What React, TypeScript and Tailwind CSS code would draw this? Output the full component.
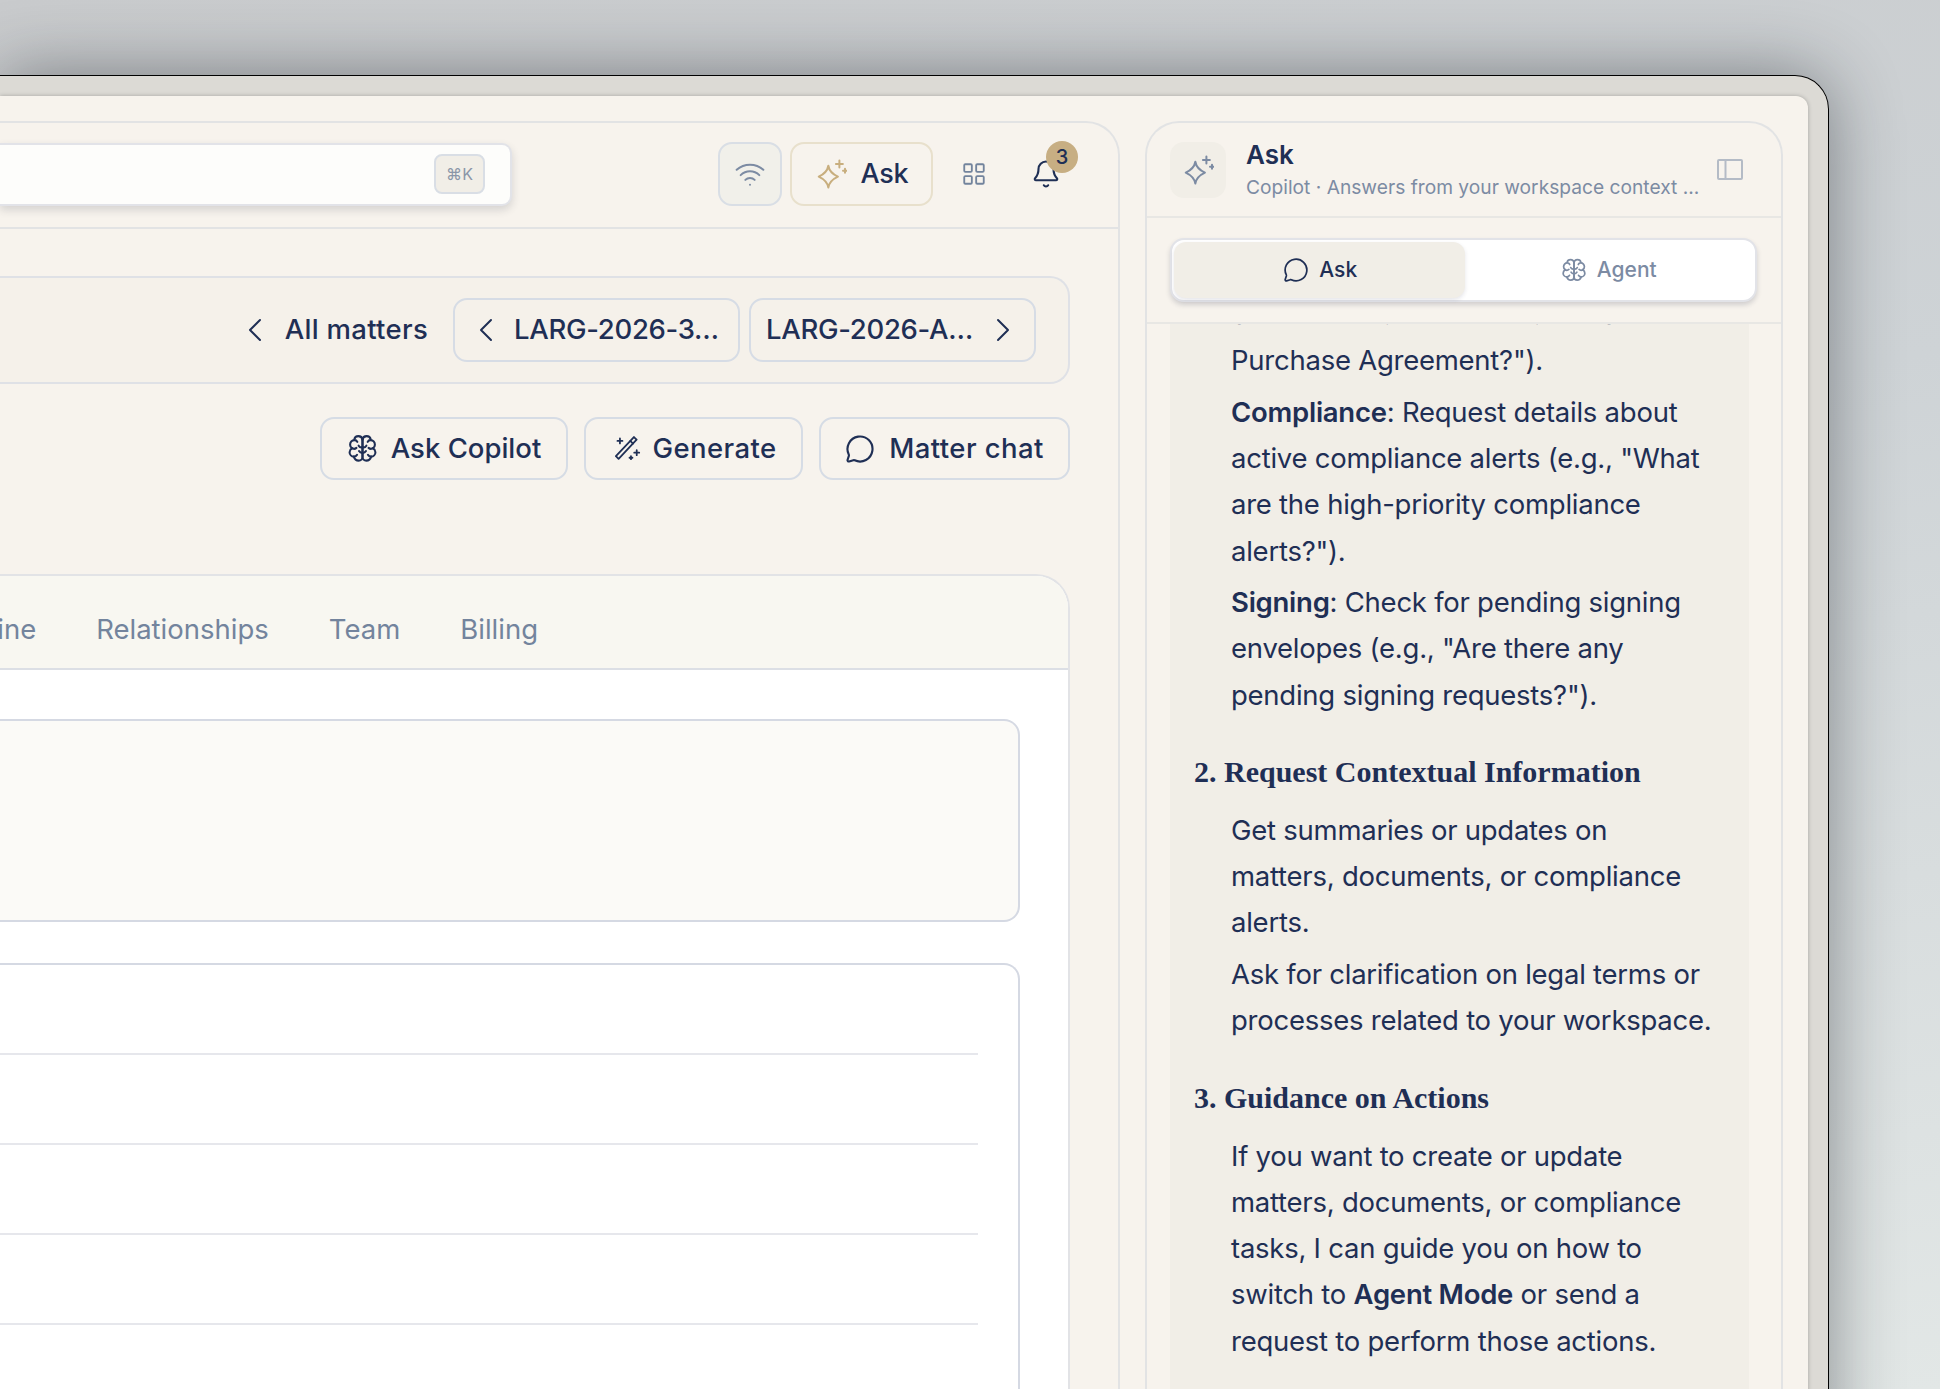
import { Bell, ChevronLeft, ChevronRight, LayoutGrid, MessageCircle, Wifi } from "lucide-react";
import type { ReactNode } from "react";

const sans = "font-['Inter','Liberation_Sans',sans-serif]";
const serif = "font-['Liberation_Serif',serif]";

function StarIcon({ className }: { className: string }) {
  return (
    <svg viewBox="0 0 24 24" fill="none" stroke="currentColor" strokeWidth="1.5" strokeLinecap="round" strokeLinejoin="round" className={className}>
      <path d="M10 5.800C10.600 9.500 12.500 11.800 17.200 14C12.500 16.200 10.600 18.500 10 22.200C9.400 18.500 7.500 16.200 2.800 14C7.500 11.800 9.400 9.500 10 5.800Z" />
      <path d="M18.300 1.900v5.200M15.700 4.500h5.200" />
      <path d="M22.500 8v3M21 9.500h3" />
    </svg>
  );
}

function BrainIcon({ className, strokeWidth = 1.6 }: { className: string; strokeWidth?: number }) {
  const half = (
    <>
      <path d="M12 5C11.700 3.400 10.300 2.400 8.800 2.400C7.300 2.400 6 3.300 5.700 4.800" />
      <path d="M8 6.900C7.600 6 6.500 5.500 5.700 5.500C3.800 5.500 2.400 7 2.400 9C2.400 10.200 3 11.200 3.900 11.800" />
      <path d="M3.900 11.800C2.700 12.500 2 13.600 2 14.900C2 16.800 3.500 18.300 5.300 18.300C5.800 20 7.300 21.400 9 21.400C10.800 21.400 12 20 12 18.500V5" />
      <path d="M3.900 11.800C5 12.500 6.400 12.300 7.300 11.500" />
      <path d="M5.300 18.300C6.300 18.300 7.300 17.800 7.800 16.900" />
      <path d="M12 11C10.800 11.300 9.600 10.800 9 9.800" />
      <path d="M12 15.500C10.800 15.500 9.800 14.900 9.300 14" />
    </>
  );
  return (
    <svg viewBox="0 0 24 24" fill="none" stroke="currentColor" strokeWidth={strokeWidth} strokeLinecap="round" strokeLinejoin="round" className={className}>
      {half}
      <g transform="matrix(-1 0 0 1 24 0)">{half}</g>
    </svg>
  );
}

function WandIcon({ className }: { className: string }) {
  return (
    <svg viewBox="0 0 24 24" fill="none" stroke="currentColor" strokeWidth="1.6" strokeLinecap="round" strokeLinejoin="round" className={className}>
      <path d="M.8 18.800 16.800 1.800 19.200 4.200 3.200 21.200Z" />
      <path d="M13.600 5.200 16 7.600" />
      <path d="M4.400 3.100v4.400M2.200 5.300h4.400" />
      <path d="M19.300 13.500v4.400M17.100 15.700h4.400" />
      <path d="M14.200 18.900v2.600M12.900 20.200h2.600" />
    </svg>
  );
}

function PanelIcon() {
  return (
    <svg viewBox="0 0 26 21" fill="none" stroke="#b4bbc6" strokeWidth="2" className="ml-[10px] h-[21px] w-[26px] shrink-0">
      <rect x="1" y="1" width="24" height="19" rx="1" />
      <path d="M8.500 1v19" />
    </svg>
  );
}

function ActionButton({ icon, label, className }: { icon: ReactNode; label: string; className: string }) {
  return (
    <button className={`flex h-[63px] items-center justify-center gap-[14px] rounded-[14px] border-2 border-[#d6dce5] text-[27.500px] font-medium text-[#1f2f55] ${className}`}>
      {icon}
      {label}
    </button>
  );
}

function Para({ children }: { children: ReactNode }) {
  return <p className="mb-[5.500px] pr-[35px] pl-[61px] last:mb-0">{children}</p>;
}

export default function App() {
  return (
    <div className={`h-[1389px] w-[1940px] overflow-hidden bg-[linear-gradient(170deg,#c9cbcd_0%,#ced3d6_40%,#e2e7e6_100%)] pt-[75px] pr-[111px] ${sans}`}>
      <div className="h-[1400px] rounded-tr-[34px] border-t border-r border-black bg-[#dcdad5] pt-[20px] pr-[20px] shadow-[0_0_70px_rgba(20,25,30,0.45)]">
        <div className="flex h-full rounded-tr-[12px] bg-[#f7f3ed] pt-[25px] pr-[25px] shadow-[0_0_4px_rgba(0,0,0,0.25)]">
          {/* main column */}
          <div className="h-full w-[1120px] shrink-0 rounded-tr-[34px] border-t-2 border-r-2 border-[#e2e3e4]">
            <header className="flex h-[106px] items-center border-b-2 border-[#e2e3e4] pb-[2px]">
              <div className="flex h-[63px] w-[512px] items-center justify-end rounded-r-[10px] border-2 border-l-0 border-[#e2e3e8] bg-[#fdfdfb] pr-[25px] shadow-[0_4px_8px_rgba(40,45,60,0.16)]">
                <kbd className={`flex h-[40px] w-[51px] items-center justify-center rounded-[8px] border-2 border-[#d9dee5] bg-[#f1eee7] text-[16px] text-[#8a96a8] ${sans}`}>⌘K</kbd>
              </div>
              <button className="ml-[206px] flex size-[64px] items-center justify-center rounded-[14px] border-2 border-[#d9dee5] bg-[#f1f0ea]">
                <Wifi className="size-[32px] text-[#7c8ba3]" strokeWidth={1.5} />
              </button>
              <button className="ml-[8px] flex h-[64px] w-[143px] items-center justify-center gap-[14px] rounded-[14px] border-2 border-[#e8e0cc] text-[27px] font-medium tracking-[-0.3px] text-[#1f2f55]">
                <StarIcon className="size-[32px] text-[#c8ae7e]" />
                Ask
              </button>
              <LayoutGrid className="ml-[28px] size-[26px] text-[#73849d]" strokeWidth={1.7} />
              <div className="relative ml-[44px] size-[30px]">
                <Bell className="size-[30px] text-[#1f2f55]" strokeWidth={1.7} />
                <span className="absolute top-[-18px] left-[15px] flex size-[32px] items-center justify-center rounded-full bg-[#c7ae83] text-[20px] font-medium text-[#1f2f55]">3</span>
              </div>
            </header>

            <div className="pr-[48px]">
              <div className="mt-[47px] flex h-[108px] items-center justify-end rounded-r-[20px] border-2 border-l-0 border-[#dfe1e6] bg-[#f5f1ea] pr-[32px] text-[27.500px] font-medium text-[#1f2f55]">
                <ChevronLeft className="size-[40px]" strokeWidth={1.2} />
                <span className="mr-[25px] ml-[10px] tracking-[0.3px]">All matters</span>
                <button className="flex h-[64px] w-[287px] items-center gap-[8px] rounded-[14px] border-2 border-[#d6dce5] pl-[11px] tracking-[-0.3px]">
                  <ChevronLeft className="size-[40px]" strokeWidth={1.2} />
                  LARG-2026-3…
                </button>
                <button className="ml-[9px] flex h-[64px] w-[287px] items-center gap-[10px] rounded-[14px] border-2 border-[#d6dce5] pl-[15px] tracking-[-0.3px]">
                  LARG-2026-A…
                  <ChevronRight className="size-[40px]" strokeWidth={1.2} />
                </button>
              </div>

              <div className="mt-[33px] flex justify-end gap-[16px]">
                <ActionButton className="w-[248px]" label="Ask Copilot" icon={<BrainIcon className="mr-[-1px] size-[31px]" />} />
                <ActionButton className="w-[219px] pl-[4px] tracking-[0.4px]" label="Generate" icon={<WandIcon className="mr-[-3px] size-[27px]" />} />
                <ActionButton className="w-[251px] tracking-[0.4px]" label="Matter chat" icon={<MessageCircle className="size-[30px]" strokeWidth={1.7} />} />
              </div>

              <section className="mt-[94px] h-[900px] rounded-tr-[34px] border-t-2 border-r-2 border-[#e2e3e6] bg-white">
                <div className="flex h-[94px] items-center rounded-tr-[32px] border-b-2 border-[#dcdfe5] bg-[#f8f7f1] pt-[16px]">
                  <nav className="flex w-[538px] shrink-0 justify-end gap-[60px] text-[27.500px] whitespace-nowrap text-[#73849d]">
                    <span>Timeline</span>
                    <span>Relationships</span>
                    <span>Team</span>
                    <span>Billing</span>
                  </nav>
                </div>
                <div className="pt-[49px] pr-[48px]">
                  <div className="h-[203px] rounded-r-[16px] border-2 border-l-0 border-[#d5d9e3] bg-[#fbfaf7]" />
                  <div className="mt-[41px] h-[700px] rounded-tr-[16px] border-t-2 border-r-2 border-[#d5d9e3] bg-white pt-[88px] pr-[40px]">
                    <div className="h-[90px] border-t-2 border-[#e6e7ec]" />
                    <div className="h-[90px] border-t-2 border-[#e6e7ec]" />
                    <div className="h-[90px] border-t-2 border-[#e6e7ec]" />
                    <div className="h-[90px] border-t-2 border-[#e6e7ec]" />
                  </div>
                </div>
              </section>
            </div>
          </div>

          {/* copilot panel */}
          <aside className="ml-[25px] flex h-full w-[638px] shrink-0 flex-col rounded-t-[34px] border-2 border-b-0 border-[#e2e3e4]">
            <div className="flex h-[95px] shrink-0 items-center border-b-2 border-[#e8e7e4] pr-[38px] pl-[23px]">
              <div className="flex size-[56px] shrink-0 items-center justify-center rounded-[14px] bg-[#f1eee7]">
                <StarIcon className="size-[32px] text-[#7c8ba3]" />
              </div>
              <div className="ml-[20px] min-w-0 flex-1">
                <div className="mt-[-2px] text-[26px] leading-[36px] font-semibold text-[#1f2f55]">Ask</div>
                <div className="truncate text-[19.200px] leading-[28px] text-[#7c8ba3]">Copilot · Answers from your workspace context ...</div>
              </div>
              <PanelIcon />
            </div>

            <div className="flex h-[106px] shrink-0 items-center border-b-2 border-[#e8e7e4] px-[23px]">
              <div className="flex h-[64px] w-[587px] rounded-[14px] border-2 border-[#e2e3e8] bg-white p-[2px] shadow-[0_3px_5px_rgba(40,45,70,0.18)]">
                <div className="flex flex-1 items-center justify-center gap-[10px] rounded-[12px] bg-[#f1eee7] pl-[2px] text-[21px] font-medium text-[#1f2f55] shadow-[0_2px_4px_rgba(40,45,70,0.12)]">
                  <MessageCircle className="size-[26px]" strokeWidth={1.6} />
                  Ask
                </div>
                <div className="flex flex-1 items-center justify-center gap-[10px] text-[21px] font-medium text-[#7c8ba3]">
                  <BrainIcon className="size-[26px]" />
                  Agent
                </div>
              </div>
            </div>

            <div className="ml-[23px] w-[579px] flex-1 overflow-hidden bg-[#f1eee7] text-[27.500px] leading-[46.200px] tracking-[-0.25px] text-[#1f2f55]">
              <div className="mt-[-33px]">
                <p className="pl-[61px] whitespace-nowrap">Show the status of the latest Stock</p>
                <Para>Purchase Agreement?").</Para>
                <Para><b className="font-semibold">Compliance</b>: Request details about active compliance alerts (e.g., "What are the high-priority compliance alerts?").</Para>
                <Para><b className="font-semibold">Signing</b>: Check for pending signing envelopes (e.g., "Are there any pending signing requests?").</Para>
                <h3 className={`mt-[31px] mb-[12px] pl-[24px] text-[30px] font-bold tracking-normal ${serif}`}>2. Request Contextual Information</h3>
                <Para>Get summaries or updates on matters, documents, or compliance alerts.</Para>
                <Para>Ask for clarification on legal terms or processes related to your workspace.</Para>
                <h3 className={`mt-[31px] mb-[12px] pl-[24px] text-[30px] font-bold tracking-normal ${serif}`}>3. Guidance on Actions</h3>
                <Para>If you want to create or update matters, documents, or compliance tasks, I can guide you on how to switch to <b className="font-semibold">Agent Mode</b> or send a request to perform those actions.</Para>
              </div>
            </div>
          </aside>
        </div>
      </div>
    </div>
  );
}
